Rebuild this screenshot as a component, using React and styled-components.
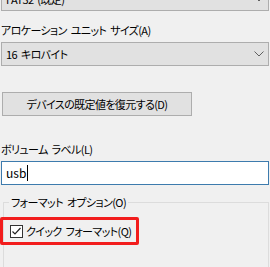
import React from 'react';
import styled, { createGlobalStyle } from 'styled-components';

const GlobalStyle = createGlobalStyle`
  html, body {
    margin: 0;
    padding: 0;
    background: #f0f0f0;
  }
  body {
    font-family: "Noto Sans CJK JP", "Noto Sans", sans-serif;
    font-size: 11px;
    letter-spacing: -0.6px;
    word-spacing: 2px;
    color: #000;
    font-feature-settings: "palt";
  }
`;

const Page = styled.div`
  width: 270px;
  height: 267px;
  overflow: hidden;
`;

const Column = styled.div`
  display: flex;
  flex-direction: column;
  margin-top: -13px;
  padding: 0 1px;
`;

const Combo = styled.div`
  box-sizing: border-box;
  height: 24px;
  width: 268px;
  display: flex;
  align-items: center;
  justify-content: space-between;
  padding: 0 4px 0 4px;
  background: #e1e1e1;
  border: 1px solid #adadad;
  line-height: 16px;
`;

const Label = styled.div`
  line-height: 16px;
  margin-top: ${(p) => p.$top}px;
  margin-bottom: 4px;
`;

const Button = styled.div`
  box-sizing: border-box;
  margin: 26px 0 0 1px;
  width: 190px;
  height: 24px;
  display: flex;
  align-items: center;
  justify-content: center;
  background: #e1e1e1;
  border: 1px solid #adadad;
  line-height: 16px;
`;

const TextBox = styled.div`
  box-sizing: border-box;
  width: 268px;
  height: 24px;
  display: flex;
  align-items: center;
  padding: 0 4px;
  background: #fff;
  border: 1px solid #3d7bad;
  line-height: 16px;
  font-size: 12px;
  letter-spacing: 0;
`;

const Caret = styled.span`
  display: inline-block;
  width: 1px;
  height: 16px;
  background: #000;
  margin-left: 1px;
`;

const Group = styled.fieldset`
  box-sizing: border-box;
  margin: 9px 0 0 2px;
  padding: 0;
  width: 266px;
  min-height: 90px;
  border: 1px solid #dcdcdc;
`;

const Legend = styled.legend`
  margin-left: 5px;
  padding: 0 2px;
  line-height: 16px;
`;

const CheckRow = styled.div`
  box-sizing: border-box;
  display: inline-flex;
  align-items: center;
  gap: 3px;
  height: 28px;
  margin: 7px 0 0 -4px;
  padding: 0 5px 0 7px;
  border: 3px solid #f21d1d;
  border-radius: 2px;
  line-height: 16px;
`;

const Box = styled.span`
  box-sizing: border-box;
  width: 13px;
  height: 13px;
  display: flex;
  align-items: center;
  justify-content: center;
  background: #fff;
  border: 1px solid #333;
`;

const Chevron = () => (
  <svg width="10" height="6" viewBox="0 0 10 6">
    <polyline points="0.5,0.5 5,5 9.5,0.5" fill="none" stroke="#606060" strokeWidth="1" />
  </svg>
);

const Check = () => (
  <svg width="11" height="11" viewBox="0 0 11 11">
    <polyline points="1.5,5.5 4,8 9.5,2" fill="none" stroke="#222" strokeWidth="1.2" />
  </svg>
);

export default function App() {
  return (
    <Page>
      <GlobalStyle />
      <Column>
        <Combo>
          <span>FAT32 (既定)</span>
          <Chevron />
        </Combo>
        <Label $top={11}>アロケーション ユニット サイズ(A)</Label>
        <Combo>
          <span>16 キロバイト</span>
          <Chevron />
        </Combo>
        <Button>デバイスの既定値を復元する(D)</Button>
        <Label $top={25}>ボリューム ラベル(L)</Label>
        <TextBox>
          usb<Caret />
        </TextBox>
        <Group>
          <Legend>フォーマット オプション(O)</Legend>
          <CheckRow>
            <Box>
              <Check />
            </Box>
            <span>クイック フォーマット(Q)</span>
          </CheckRow>
        </Group>
      </Column>
    </Page>
  );
}
